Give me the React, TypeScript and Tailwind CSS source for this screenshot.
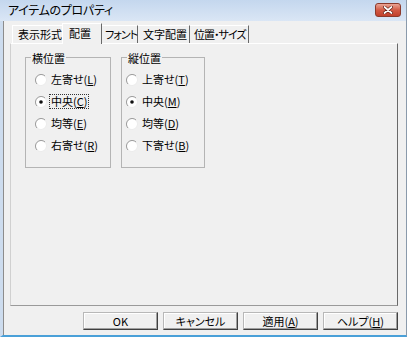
import React from "react";

const hItems = [
    { label: "左寄せ", key: "L" },
    { label: "中央", key: "C", checked: true, focus: true },
    { label: "均等", key: "E" },
    { label: "右寄せ", key: "R" },
];

const vItems = [
    { label: "上寄せ", key: "T" },
    { label: "中央", key: "M", checked: true },
    { label: "均等", key: "D" },
    { label: "下寄せ", key: "B" },
];

function Radio({ checked }: { checked?: boolean }) {
    return (
        <svg width="12" height="12" viewBox="0 0 12 12" className="shrink-0">
            <circle cx="6" cy="6" r="5.2" fill="#fff" />
            <path d="M10 2 A5.66 5.66 0 0 0 2 10" stroke="#9a9a9a" fill="none" />
            <path d="M2 10 A5.66 5.66 0 0 0 10 2" stroke="#ececec" fill="none" />
            {checked && <circle cx="6" cy="6" r="1.8" fill="#111" />}
        </svg>
    );
}

function Group({ title, items, width, padLeft }: {
    title: string;
    items: { label: string; key: string; checked?: boolean; focus?: boolean }[];
    width: string;
    padLeft: string;
}) {
    return (
        <fieldset className={`${width} h-[117px] border border-[#b4b4b4]`}>
            <legend className="ml-[5px] px-px leading-[14px]">{title}</legend>
            <div className={`flex flex-col pt-[4px] ${padLeft}`}>
                {items.map((it) => (
                    <div key={it.key} className="flex items-center h-[22px] gap-[2px] whitespace-nowrap">
                        <Radio checked={it.checked} />
                        <span
                            className={
                                it.focus
                                    ? "border border-dotted border-[#333] px-px leading-[13px]"
                                    : "border border-transparent px-px leading-[13px]"
                            }
                        >
                            {it.label}(<u>{it.key}</u>)
                        </span>
                    </div>
                ))}
            </div>
        </fieldset>
    );
}

function Button({ children }: { children: React.ReactNode }) {
    return (
        <button
            type="button"
            className="w-[75px] h-[18px] flex items-center justify-center leading-[14px] whitespace-nowrap border border-t-[#b8b8b8] border-l-[#b8b8b8] border-r-[#404040] border-b-[#404040] shadow-[inset_-1px_-1px_0_#a0a0a0,inset_1px_1px_0_#fff] bg-[#f0f0f0]"
        >
            {children}
        </button>
    );
}

export default function App() {
    return (
        <div className="w-[408px] h-[343px] bg-white text-[11px] text-black font-['Noto_Sans_CJK_JP',sans-serif] [font-feature-settings:'palt']">
            <div className="w-[407px] h-[337px] flex flex-col bg-[#f0f0f0] border-l-[3px] border-l-[#cddcee] border-r border-r-[#8a9aab] border-b-2 border-b-[#4aa0d8]">

                {/* title bar */}
                <div className="h-[22px] -ml-[3px] flex items-center justify-between pl-[8px] pr-[5px] bg-gradient-to-b from-[#c4d7ee] to-[#dae6f5]">
                    <span className="text-[12px] leading-[14px] tracking-[-0.3px]">アイテムのプロパティ</span>
                    <div className="w-[26px] h-[14px] rounded-[3px] border border-[#8b3a2c] bg-gradient-to-b from-[#e9a596] via-[#d25a45] to-[#c1412c] flex items-center justify-center">
                        <svg width="10" height="8" viewBox="0 0 10 8">
                            <path d="M1.5 1 L8.5 7 M8.5 1 L1.5 7" stroke="#5a1a10" strokeWidth="3" strokeLinecap="round" />
                            <path d="M1.5 1 L8.5 7 M8.5 1 L1.5 7" stroke="#fff" strokeWidth="1.7" strokeLinecap="round" />
                        </svg>
                    </div>
                </div>

                <div className="flex flex-col pt-[2px] pl-[6px] border-l border-l-[#8c8c8c] h-full">

                    {/* tabs */}
                    <div className="flex items-end h-[20px] pl-[2px] relative z-10 whitespace-nowrap">
                        <div className="w-[50px] h-[18px] flex items-center pl-[5px] border-t border-l border-white">表示形式</div>
                        <div className="w-[40px] h-[21px] -mb-px flex items-center pl-[6px] bg-[#f0f0f0] border-t border-l border-white border-r border-r-[#696969]">配置</div>
                        <div className="w-[36px] h-[18px] flex items-center pl-[3px] tracking-[-1px] border-t border-t-white border-r border-r-[#696969]">フォント</div>
                        <div className="w-[52px] h-[18px] flex items-center pl-[5px] border-t border-t-white border-r border-r-[#696969]">文字配置</div>
                        <div className="w-[59px] h-[18px] flex items-center pl-[4px] tracking-[-1px] border-t border-t-white border-r border-r-[#696969]">位置・サイズ</div>
                    </div>

                    {/* panel */}
                    <div className="w-[388px] h-[263px] border border-t-white border-l-[#d0d0d0] border-r-[#696969] border-b-[#9a9a9a] flex items-start pl-[14px] pt-[7px] gap-[10px]">
                        <Group title="横位置" items={hItems} width="w-[86px]" padLeft="pl-[9px]" />
                        <Group title="縦位置" items={vItems} width="w-[84px]" padLeft="pl-[4px]" />
                    </div>

                    {/* buttons */}
                    <div className="w-[388px] flex justify-end gap-[5px] mt-[6px]">
                        <Button>OK</Button>
                        <Button>キャンセル</Button>
                        <Button>適用(<u>A</u>)</Button>
                        <Button>ヘルプ(<u>H</u>)</Button>
                    </div>
                </div>
            </div>
        </div>
    );
}
